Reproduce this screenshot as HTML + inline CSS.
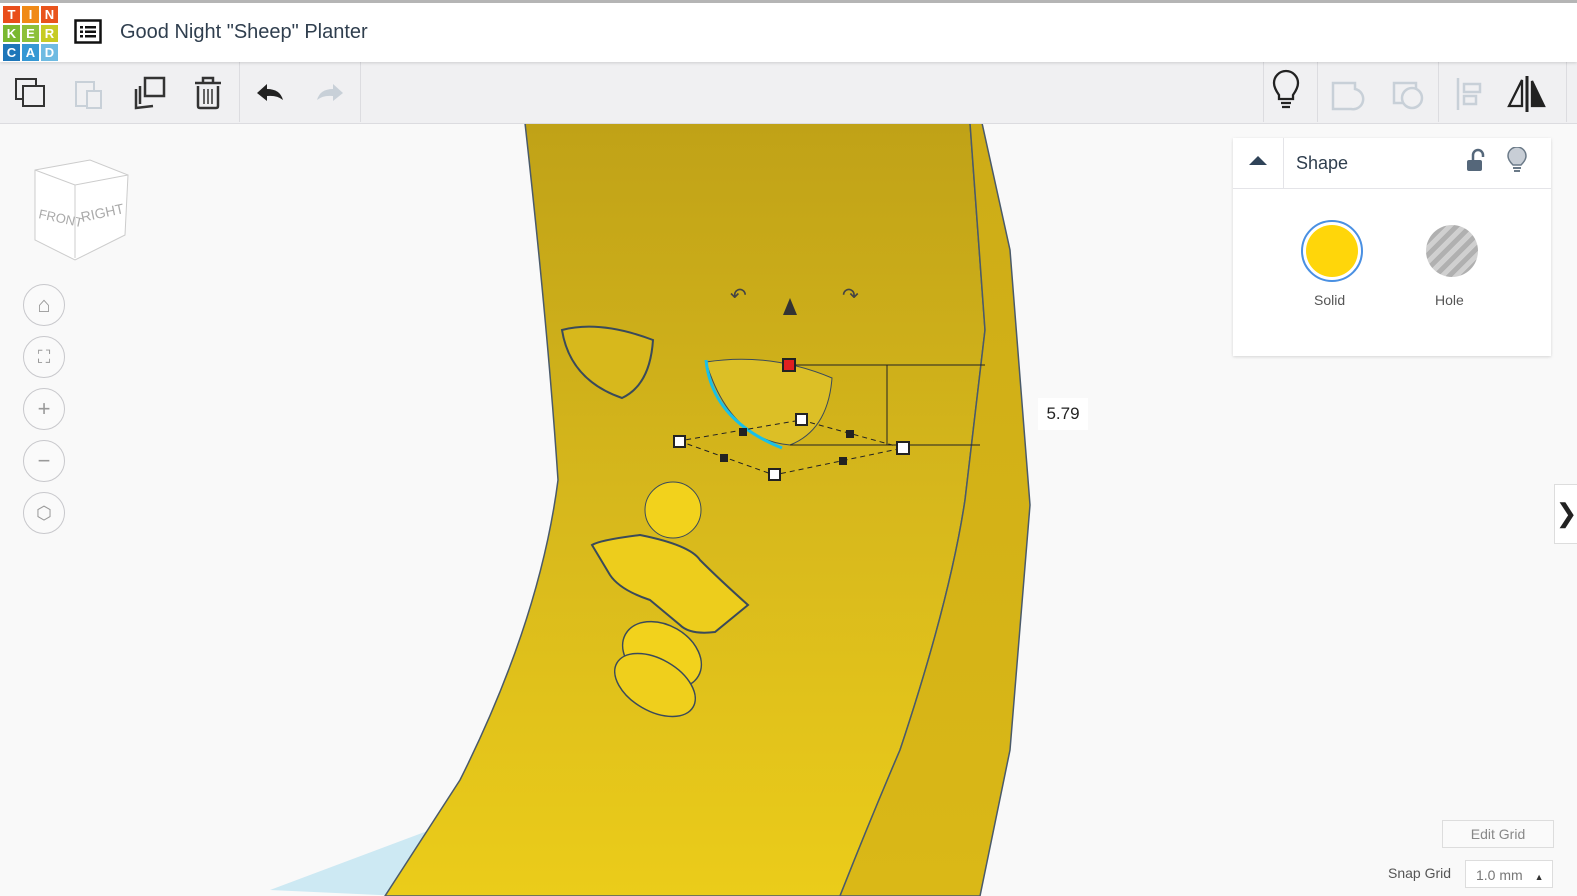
<!DOCTYPE html>
<html><head><style>
body{margin:0;width:1577px;height:896px;overflow:hidden;background:#f9f9f9;font-family:"Liberation Sans",sans-serif;position:relative}
.top{position:absolute;left:0;top:0;width:1577px;height:62px;background:#fff;border-top:3px solid #b5b5b5;box-sizing:border-box;box-shadow:0 1px 3px rgba(0,0,0,.15);z-index:3}
.logo{position:absolute;left:3px;top:3px;display:grid;grid-template-columns:repeat(3,17px);grid-template-rows:repeat(3,17px);gap:2px}
.logo div{color:#fff;font-weight:bold;font-size:13px;text-align:center;line-height:17px}
.title{position:absolute;left:120px;top:18px;font-size:20px;color:#2f3e4e}
.tb{position:absolute;left:0;top:62px;width:1577px;height:61px;background:#f0f0f2;border-bottom:1px solid #dcdce0;z-index:2}
.sep{position:absolute;top:0;width:1px;height:60px;background:#dcdce0}
.panel{position:absolute;left:1233px;top:138px;width:318px;height:218px;background:#fff;box-shadow:0 1px 3px rgba(0,0,0,.15);z-index:3}
.nav{position:absolute;left:23px;width:42px;height:42px;border:1px solid #c8c8cc;border-radius:50%;box-sizing:border-box;background:#fafafa;color:#999;text-align:center;line-height:40px;font-size:22px}
</style></head><body>
<svg width="1577" height="896" style="position:absolute;left:0;top:0">
<defs>
<linearGradient id="g1" x1="0" y1="0" x2="0" y2="1"><stop offset="0" stop-color="#c0a217"/><stop offset=".5" stop-color="#d7b81c"/><stop offset="1" stop-color="#ebcc1a"/></linearGradient>
<linearGradient id="g2" x1="0" y1="0" x2="0" y2="1"><stop offset="0" stop-color="#cdac17"/><stop offset="1" stop-color="#dab817"/></linearGradient>
</defs>
<polygon points="270,890 430,830 440,860 400,896" fill="#cde9f3"/>
<path d="M525,123 Q548,330 558,480 Q540,620 460,780 L385,896 L840,896 Q870,820 900,750 Q950,600 965,500 L985,330 L970,123 Z" fill="url(#g1)" stroke="#4a5a6a" stroke-width="1.5"/>
<path d="M970,123 L985,330 L965,500 Q950,600 900,750 Q870,820 840,896 L980,896 L1010,750 L1030,505 L1010,250 L982,123 Z" fill="url(#g2)" stroke="#4a5a6a" stroke-width="1.5"/>
<path d="M562,330 Q600,320 653,340 Q650,385 622,398 Q570,380 562,330Z" fill="#d7b81c" stroke="#3a4a5a" stroke-width="2"/>
<path d="M706,362 Q770,352 832,378 Q828,430 790,445 Q730,440 706,362Z" fill="#dcbf26" stroke="#3a4a5a" stroke-width="1"/>
<path d="M706,360 Q712,420 782,448" fill="none" stroke="#18c0e8" stroke-width="3"/>
<g stroke="#222" stroke-width="1" fill="none">
<line x1="790" y1="365" x2="985" y2="365"/><line x1="790" y1="445" x2="980" y2="445"/><line x1="887" y1="365" x2="887" y2="445"/>
<path d="M679,441 L774,475 L903,448 L801,420 Z" stroke-dasharray="5,4"/>
</g>
<g fill="#fff" stroke="#222" stroke-width="2"><rect x="674" y="436" width="11" height="11"/><rect x="769" y="469" width="11" height="11"/><rect x="897" y="442" width="12" height="12"/><rect x="796" y="414" width="11" height="11"/></g>
<rect x="783" y="359" width="12" height="12" fill="#e02020" stroke="#222" stroke-width="2"/>
<g fill="#222"><rect x="739" y="428" width="8" height="8"/><rect x="846" y="430" width="8" height="8"/><rect x="720" y="454" width="8" height="8"/><rect x="839" y="457" width="8" height="8"/></g>
<polygon points="783,315 790,298 797,315" fill="#333"/>
<text x="730" y="302" font-size="20" fill="#444">↶</text><text x="842" y="302" font-size="20" fill="#444">↷</text>
<circle cx="673" cy="510" r="28" fill="#f2d21c" stroke="#3a4a5a" stroke-width="1"/>
<path d="M592,545 Q600,540 640,535 Q690,545 700,560 Q720,580 748,605 L715,632 Q690,635 680,625 L650,600 Q620,590 610,575 Z" fill="#edcd1c" stroke="#3a4a5a" stroke-width="2"/>
<ellipse cx="662" cy="655" rx="42" ry="30" transform="rotate(30 662 655)" fill="#f2d21c" stroke="#3a4a5a" stroke-width="1.5"/>
<ellipse cx="655" cy="685" rx="44" ry="26" transform="rotate(30 655 685)" fill="#efcf1c" stroke="#3a4a5a" stroke-width="1.5"/>
<path d="M35,170 L90,160 L128,175 L125,235 L75,260 L35,240Z" fill="#fff" stroke="#ccc"/>
<path d="M35,170 L75,185 L128,175 M75,185 L75,258" stroke="#ccc" fill="none"/>
<text x="38" y="218" font-size="13" fill="#aaa" transform="rotate(12 38 218)">FRONT</text>
<text x="82" y="222" font-size="14" fill="#aaa" transform="rotate(-12 82 222)">RIGHT</text>
</svg>
<div class="top">
<div class="logo">
<div style="background:#e94e1b">T</div><div style="background:#f08a17">I</div><div style="background:#e9541c">N</div>
<div style="background:#7ab830">K</div><div style="background:#8ec03a">E</div><div style="background:#c7cb24">R</div>
<div style="background:#1e76b9">C</div><div style="background:#3598d4">A</div><div style="background:#6fbbe2">D</div>
</div>
<svg style="position:absolute;left:74px;top:16px" width="28" height="25"><rect x="1.5" y="1.5" width="25" height="22" fill="none" stroke="#111" stroke-width="2.5"/><g fill="#111"><rect x="6" y="7" width="3" height="2.5"/><rect x="11" y="7" width="11" height="2.5"/><rect x="6" y="11.5" width="3" height="2.5"/><rect x="11" y="11.5" width="11" height="2.5"/><rect x="6" y="16" width="3" height="2.5"/><rect x="11" y="16" width="11" height="2.5"/></g></svg>
<div class="title">Good Night "Sheep" Planter</div>
</div>
<div class="tb">
<svg width="1577" height="60" style="position:absolute;left:0;top:0">
<g fill="none" stroke="#333" stroke-width="2"><rect x="16" y="17" width="20" height="20"/><rect x="23" y="24" width="21" height="20" fill="#f0f0f2"/></g>
<g fill="none" stroke="#c8d0d8" stroke-width="2"><rect x="76" y="20" width="18" height="24"/><rect x="87" y="29" width="14" height="17" fill="#f0f0f2"/></g>
<g fill="none" stroke="#333" stroke-width="2.5"><path d="M136,27 L136,46 L153,44"/><path d="M140,24 L140,42"/><rect x="145" y="16" width="19" height="18" fill="#f0f0f2"/></g>
<g fill="none" stroke="#333" stroke-width="2.5"><path d="M195,21 L221,21 M203,21 L203,16 L213,16 L213,21"/><path d="M198,24 L198,44 Q198,46 200,46 L216,46 Q218,46 218,44 L218,24"/><path d="M204,27 V42 M208,27 V42 M212,27 V42" stroke-width="1.5"/></g>
<path d="M257,31 L267,22 L267,27 Q280,27 283,38 Q277,33 267,34 L267,39 Z" fill="#222"/>
<path d="M343,31 L333,22 L333,27 Q320,27 317,38 Q323,33 333,34 L333,39 Z" fill="#c8d0d8"/>
<g fill="none" stroke="#222" stroke-width="2.3"><path d="M1279,33 Q1274,26 1274,21 A12,12 0 1 1 1298,21 Q1298,26 1293,33 L1293,37 L1279,37 Z"/><path d="M1281,41 H1291 M1282,45 H1290"/></g>
<g fill="none" stroke="#c8d0d8" stroke-width="2.5"><path d="M1333,21 H1355 V27 A9,9 0 0 1 1351,47 H1333 Z"/><rect x="1394" y="21" width="22" height="20"/><circle cx="1412" cy="36" r="10" fill="#f0f0f2"/><path d="M1458,16 V48"/><rect x="1464" y="22" width="16" height="8"/><rect x="1464" y="34" width="12" height="8"/></g>
<g fill="none" stroke="#222" stroke-width="2.3"><path d="M1509,44 L1522,18 V44 Z"/><path d="M1532,19 L1544,44 H1532 Z" fill="#222"/><path d="M1527,14 V50" stroke-width="3"/></g>
</svg>
<div class="sep" style="left:239px"></div><div class="sep" style="left:360px"></div><div class="sep" style="left:1263px"></div><div class="sep" style="left:1317px"></div><div class="sep" style="left:1438px"></div><div class="sep" style="left:1566px"></div>
</div>
<div class="nav" style="top:284px">⌂</div><div class="nav" style="top:336px;font-size:18px">⛶</div><div class="nav" style="top:388px">+</div><div class="nav" style="top:440px">−</div><div class="nav" style="top:492px;font-size:18px">⬡</div>
<div class="panel">
<div style="position:absolute;left:0;top:0;width:318px;height:50px;border-bottom:1px solid #e4e4e8"></div>
<div style="position:absolute;left:50px;top:0;width:1px;height:50px;background:#e4e4e8"></div>
<svg style="position:absolute;left:16px;top:17px" width="18" height="12"><polygon points="0,10 9,1 18,10" fill="#2f4358"/></svg>
<div style="position:absolute;left:63px;top:15px;font-size:18px;color:#2f3e4e">Shape</div>
<svg style="position:absolute;left:232px;top:10px" width="20" height="25"><path d="M8,12 V7 A5,5 0 0 1 18,7 V9" fill="none" stroke="#55677a" stroke-width="2.5"/><rect x="2" y="12" width="15" height="11" rx="2" fill="#55677a"/></svg>
<svg style="position:absolute;left:273px;top:9px" width="22" height="28"><path d="M7,18 Q2,13 2,9 A9,9 0 1 1 20,9 Q20,13 15,18 Z" fill="#c8ced6" stroke="#6b7a88" stroke-width="1.5"/><path d="M7,21 H15 M8,24 H14" stroke="#6b7a88" stroke-width="2"/></svg>
<div style="position:absolute;left:68px;top:82px;width:62px;height:62px;border-radius:50%;border:2px solid #4a90e2;box-sizing:border-box;padding:3px"><div style="width:52px;height:52px;border-radius:50%;background:#ffd60a"></div></div>
<div style="position:absolute;left:193px;top:87px;width:52px;height:52px;border-radius:50%;background:repeating-linear-gradient(135deg,#b0b0b0 0 5px,#d0d0d0 5px 10px)"></div>
<div style="position:absolute;left:81px;top:154px;font-size:14px;color:#555">Solid</div>
<div style="position:absolute;left:202px;top:154px;font-size:14px;color:#555">Hole</div>
</div>
<div style="position:absolute;left:1038px;top:398px;width:50px;height:32px;background:#fff;font-size:17px;line-height:32px;text-align:center;color:#222">5.79</div>
<div style="position:absolute;left:1554px;top:484px;width:23px;height:58px;background:#fff;border:1px solid #ddd;font-size:26px;line-height:56px;color:#222;text-align:center">❯</div>
<div style="position:absolute;left:1442px;top:820px;width:110px;height:26px;border:1px solid #ddd;background:#fafafa;color:#888;font-size:14px;line-height:26px;text-align:center">Edit Grid</div>
<div style="position:absolute;left:1388px;top:865px;font-size:14px;color:#555">Snap Grid</div>
<div style="position:absolute;left:1465px;top:860px;width:88px;height:28px;border:1px solid #ddd;background:#fff;color:#777;font-size:14px;line-height:28px;padding-left:10px;box-sizing:border-box">1.0 mm <span style="font-size:9px;color:#333;margin-left:8px">▲</span></div>
</body></html>
